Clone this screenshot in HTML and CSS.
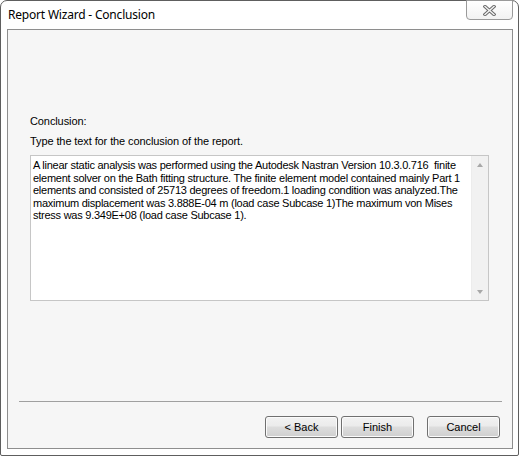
FILE: index.html
```html
<!DOCTYPE html>
<html>
<head>
<meta charset="utf-8">
<link rel="stylesheet" href="styles.css">
</head>
<body>
<div class="window">
  <div class="titlebar">
    <div class="title">Report Wizard - Conclusion</div>
    <div class="close">
      <svg width="13" height="11" viewBox="0 0 13 11">
        <path d="M2 1.5 L11 9.5 M11 1.5 L2 9.5" stroke="#6b6b6b" stroke-width="3.4" stroke-linecap="square" fill="none"/>
        <path d="M2 1.5 L11 9.5 M11 1.5 L2 9.5" stroke="#f4f4f4" stroke-width="1.4" stroke-linecap="square" fill="none"/>
      </svg>
    </div>
  </div>
  <div class="client">
    <div class="label first">Conclusion:</div>
    <div class="label">Type the text for the conclusion of the report.</div>
    <div class="textbox">
      <div class="text">A linear static analysis was performed using the Autodesk Nastran Version 10.3.0.716&nbsp; finite<br>element solver on the Bath fitting structure. The finite element model contained mainly Part 1<br>elements and consisted of 25713 degrees of freedom.1 loading condition was analyzed.The<br>maximum displacement was 3.888E-04 m (load case Subcase 1)The maximum von Mises<br>stress was 9.349E+08 (load case Subcase 1).</div>
      <div class="scrollbar">
        <span class="arrow up"></span>
        <span class="arrow down"></span>
      </div>
    </div>
    <div class="spacer"></div>
    <div class="separator"></div>
    <div class="buttons">
      <button class="btn">&lt; Back</button>
      <button class="btn">Finish</button>
      <button class="btn cancel">Cancel</button>
    </div>
  </div>
</div>
</body>
</html>
```

FILE: styles.css
```css
html, body {
  margin: 0;
  padding: 0;
  background: #ffffff;
}
.window {
  width: 519px;
  height: 456px;
  box-sizing: border-box;
  border: 1px solid #5e5e5e;
  border-radius: 7px 7px 2px 2px;
  background: #ffffff;
  display: flex;
  flex-direction: column;
}
.titlebar {
  height: 28px;
  display: flex;
  justify-content: space-between;
  align-items: flex-start;
  flex: none;
}
.title {
  font-family: "Noto Sans", "Open Sans", sans-serif;
  font-size: 12px;
  color: #000;
  margin-left: 7px;
  margin-top: 6px;
  line-height: 16px;
  letter-spacing: -0.2px;
}
.close {
  width: 45px;
  height: 18px;
  margin-top: -1px;
  margin-right: 5px;
  border: 1px solid #9a9a9a;
  border-radius: 0 0 4px 4px;
  background: linear-gradient(#ffffff, #f2f2f2);
  display: flex;
  align-items: center;
  justify-content: center;
}
.client {
  flex: 1;
  margin: 0 5px 6px 6px;
  border: 1px solid #8e8e8e;
  background: #f6f6f6;
  display: flex;
  flex-direction: column;
  font-family: "Liberation Sans", Arial, sans-serif;
  font-size: 11px;
  color: #000;
}
.label {
  margin-left: 22px;
  line-height: 13px;
  margin-top: 7px;
  letter-spacing: -0.1px;
}
.label.first {
  margin-top: 85px;
}
.textbox {
  margin: 7px 0 0 22px;
  width: 459px;
  height: 146px;
  box-sizing: border-box;
  border: 1px solid #c6c6c6;
  background: #ffffff;
  display: flex;
}
.text {
  flex: 1;
  padding: 3px 0 0 2px;
  line-height: 12.6px;
  white-space: nowrap;
  letter-spacing: -0.25px;
  color: #000;
}
.scrollbar {
  width: 17px;
  background: #f1f1f1;
  border-left: 1px solid #ececec;
  display: flex;
  flex-direction: column;
  justify-content: space-between;
  align-items: center;
  padding: 7px 0 6px;
  box-sizing: border-box;
}
.arrow {
  width: 0;
  height: 0;
  border-left: 3.5px solid transparent;
  border-right: 3.5px solid transparent;
}
.arrow.up {
  border-bottom: 4px solid #a8a8a8;
}
.arrow.down {
  border-top: 4px solid #a8a8a8;
}
.spacer {
  flex: 1;
}
.separator {
  margin: 0 10px 0 11px;
  height: 1px;
  background: #a0a0a0;
}
.buttons {
  display: flex;
  justify-content: flex-end;
  margin: 14px 12px 10px 0;
}
.btn {
  width: 73px;
  height: 22px;
  margin-left: 3px;
  box-sizing: border-box;
  border: 1px solid #707070;
  border-radius: 3px;
  background: linear-gradient(#f2f2f2 0%, #ebebeb 45%, #dddddd 50%, #cfcfcf 100%);
  box-shadow: inset 0 0 0 1px #fbfbfb;
  font-family: "Liberation Sans", Arial, sans-serif;
  font-size: 11px;
  color: #000;
  padding: 0;
}
.btn.cancel {
  margin-left: 13px;
}
```
